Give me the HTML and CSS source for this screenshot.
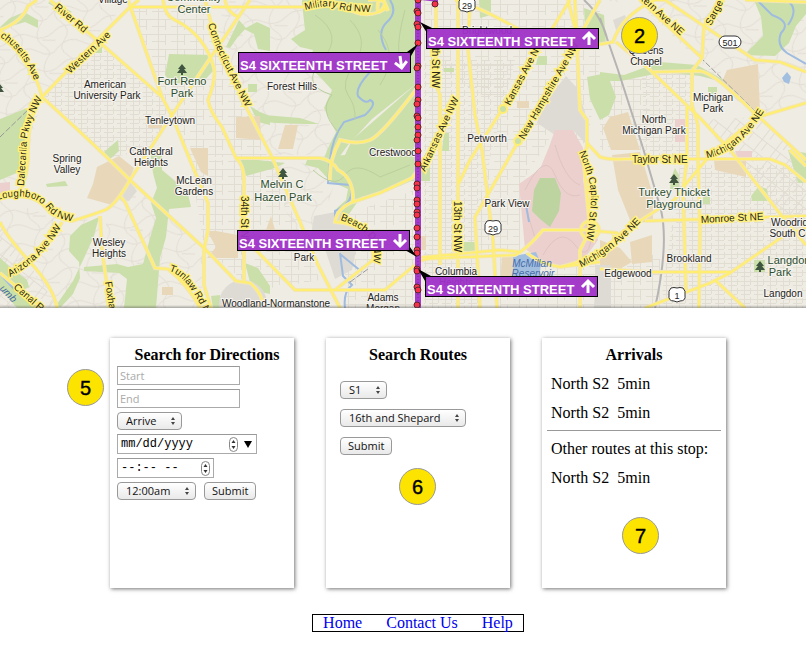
FILE: index.html
```html
<!DOCTYPE html>
<html lang="en">
<head>
<meta charset="utf-8">
<title>Bus routes and arrivals</title>
<meta name="viewport" content="width=device-width, initial-scale=1">
<link rel="stylesheet" href="styles.css">
</head>
<body>
<header class="map">
<svg class="map-art" viewBox="0 0 806 308" preserveAspectRatio="xMidYMid slice" role="img" aria-label="Route map of Washington, DC">
  <defs>
    <pattern id="grid" width="13" height="9" patternUnits="userSpaceOnUse"><path class="lane" d="M0 2.500H13M0 6.500H9M3.500 0V9M9.500 0V6"/></pattern>
    <pattern id="grid-wide" width="19" height="15" patternUnits="userSpaceOnUse"><path class="lane" d="M0 4.500H19M6.500 0V15M13.500 4V15M0 11.500H13"/></pattern>
    <pattern id="grid-tilt" width="17" height="14" patternUnits="userSpaceOnUse" patternTransform="rotate(38)"><path class="lane" d="M0 4.500H17M6.500 0V14M12.500 4V14"/></pattern>
    <pattern id="winding" width="46" height="34" patternUnits="userSpaceOnUse" patternTransform="rotate(-12)"><path class="lane" d="M0 8Q12 0 23 8T46 8M0 25Q14 14 26 24T46 25M9 0Q18 10 9 18T9 34M33 0Q24 12 33 20T33 34M33 14L46 17"/></pattern>
    <g id="tree"><path fill="#3f5540" d="M0-6L4-1H2L5 3H1V5H-1V3H-5L-2-1H-4Z"/></g>
    <g id="arrow-up"><path class="arrow" d="M0 7V-5M-6 1L0-5L6 1"/></g>
    <g id="us-shield"><path fill="#fff" stroke="#333" d="M-6-7Q-3-8 0-7Q3-8 6-7Q9-4 8 0Q9 6 3 6Q0 8-3 6Q-9 6-8 0Q-9-4-6-7Z"/></g>
    <g id="roads">
      <path d="M50 0L97 40L162 97L172 116L190 160L208 203V230L204 250V285L211 308M128 0L162 97M139 0L130 7L97 40L42 97M130 7H303Q330 0 350 10T388 7M0 30Q22 22 28 6L37 0M0 30Q33 60 42 97Q95 145 130 180L204 248L236 281L250 283Q262 292 264 308M42 97Q27 115 28 160Q25 190 15 195L0 195M205 0L213 30L245 105L272 157L300 222L318 265L340 308M163 0Q165 16 175 20Q205 35 214 68Q216 80 208 100Q210 112 222 127L236 158H320Q332 160 338 170Q354 178 353 202Q337 208 335 222Q375 225 373 260L335 290M250 0L209 60L172 115L130 180Q115 206 105 210T72 221Q54 218 40 202Q28 194 0 195M225 0Q227 12 238 17M236 158Q244 165 244 180V281M100 216L102 250L107 285L112 308M121 197L125 202L155 268L168 269Q188 285 200 308M62 222Q44 258 10 270M0 222Q6 236 30 262T57 308M0 273L42 308"/>
      <path d="M418 87Q382 135 370 140T340 140Q329 160 330 180M353 202L380 193L412 178Q435 150 455 100M244 238L295 290H385L415 265Q420 258 440 258L515 255Q526 250 543 230H585L618 233M415 258L500 250L520 252M436 0V85L440 95V265M458 0V308M470 0L468 50L475 115L482 150L493 240L497 308M570 0L503 108L470 160L458 185M600 0L560 70L518 142L475 217L480 308M575 0L580 110L587 120V145L584 165L590 230L580 250V308M568 0L580 48L613 42Q622 15 655 0M455 0Q480 7 520 30L580 50M527 253Q540 264 560 267L600 262M587 143L600 157Q610 160 625 159H770L785 165L806 182"/>
      <path d="M655 0H665L704 26L755 60L780 62L806 72M640 0L702 58M758 116L806 160M724 0L704 26L702 58L692 71V105L698 125V160L700 230L699 308M616 42L650 70L700 118L730 150L785 220L806 245M652 72L700 71Q714 72 758 117M560 267Q600 258 618 235L660 208Q675 204 685 185L712 153L758 117L806 103M687 107V160L683 190L686 290M645 221L806 216M645 308L710 283L730 273L785 235L806 228M600 269L650 272H730M715 280L745 308M745 0L806 2M790 150L806 166"/>
      <path d="M368 0Q390 -2 383 8T378 3T388 11"/>
      <circle cx="590" cy="230" r="9"/>
    </g>
  </defs>

  <rect width="806" height="308" fill="#efece4"/>

  <g class="local-streets">
    <path fill="url(#winding)" d="M0 0H128L97 40L42 97L20 185H0ZM0 200L60 218L100 220L107 308H0ZM105 210L130 180L205 250V308H112ZM230 0H305V30L290 40L335 80L325 105L337 155H268L213 30ZM250 160L340 165L320 230L300 250L268 160ZM600 0H806V102L758 117L640 5Z"/>
    <path fill="url(#grid)" d="M97 40L162 97L172 116L150 150L108 158L42 97ZM430 60H515L503 108L475 215L480 308H424V60ZM642 75L692 71L698 160H645ZM680 165H806V308H660Z"/>
    <path fill="url(#grid-wide)" d="M130 7H205L245 105L268 157H190L162 97ZM190 160H244V281L204 248ZM244 165L270 160L320 280L258 290ZM424 0H600V60L587 145L555 130L520 185V250H480L475 215L503 108L424 60ZM500 255H660V308H500ZM600 85L650 72V150H600ZM345 215L415 190V308H345Z"/>
    <path fill="url(#grid-tilt)" d="M0 220L57 306H0ZM700 120L758 117L806 160V215L785 220Z"/>
  </g>

  <g fill="#cbdfaa">
    <path d="M0 27L10 18L24 12L38 20V28L25 22L12 26L0 33ZM52 0L72 12L66 14L48 3ZM0 119L27 108L25 150L19 172L0 180Z"/>
    <path d="M169 54L213 55V71L201 84L171 83L165 75ZM95 47L102 42V53H94ZM104 152L118 140L119 151L109 160ZM226 47L239 20L246 28L237 38L230 48ZM244 29L257 22L270 28V51L258 49L254 34ZM248 84H257V92H248ZM250 106L260 112L270 116V125L258 122ZM264 115L300 118L319 124L304 124L276 123L266 122Z"/>
    <path d="M302 0H416V84L372 119L348 145L337 160L324 158L329 146L336 132L324 108L332 90L321 78L308 66L313 50L300 47L291 39L305 30L303 12Z"/>
    <path d="M308 158L345 155L352 140L416 84V179L386 192L361 197L349 214L333 218L337 208L346 200L348 189L330 181L318 168L305 165ZM237 158L258 160L285 163L275 168L246 176Z"/>
    <path d="M150 150L162 154L162 170L174 180L188 194L191 207L169 209L166 237L160 258L156 308H124L127 279L119 273L84 271V267L117 264L128 267L143 264L150 238L156 218L151 203L157 188L153 173Z"/>
    <path d="M99 217L94 236L85 256L73 281L55 307H61L73 294L80 278L79 262L69 251L70 236L81 225ZM0 258L14 270L27 280L29 287L23 290L45 308H17L0 288ZM46 184L65 181L68 186L47 187ZM211 296L220 295V308H213ZM245 263L258 268L270 286V294L252 290Z"/>
    <path d="M479 0H491V15L480 18ZM538 56L547 56V65L536 65ZM584 8L604 15L606 45L594 43L585 28ZM587 77L607 73L616 97L609 115L600 120L590 99ZM444 68H454V72H444ZM444 133H449V151H442ZM410 160H430V181H410ZM463 242H476V251H463ZM600 72L624 75L660 62L697 65L717 76L730 84L700 76L664 72L621 81L600 81Z"/>
    <path d="M754 0H806V14L796 26L789 43L775 56L744 55L763 36L761 17ZM745 77H757L759 84H746ZM708 87H717V94H708ZM671 178L675 168L679 175V190H670ZM751 196L759 186L767 189L769 201H752ZM788 150L806 153V183H798ZM754 260H765V272H754ZM611 245L618 250L616 257ZM703 197L710 194V204H703Z"/>
  </g>
  <g fill="#e8d8b9">
    <path d="M97 167L119 156L134 168L125 191L112 205L87 198L93 184ZM236 117L260 116L261 140L236 138ZM190 148H208V176L201 172ZM148 125H162V128H148ZM207 231H216L238 235V258H207L216 247ZM285 125H298L293 149H278ZM271 216L275 230H266ZM162 287H173V295H162ZM418 236H426V250H418ZM517 101H529V108H517ZM612 155L640 152L653 195V220L632 225L618 190ZM630 242L652 235V262L632 264ZM600 240L620 248L632 262L618 270L600 267ZM610 117L628 112L640 150H611L603 128ZM727 70L758 64L760 112L738 101L721 84ZM714 160H746V177L715 170ZM502 255H514V285H500Z"/>
  </g>
  <path fill="#dedbd4" d="M120 200L130 182L137 191L129 201ZM537 123L541 107L566 76L577 88L585 112V143L573 130L555 135ZM613 20L625 15L630 30H616ZM596 265H611V308H594ZM314 216L341 211L360 230L352 270L335 279L326 252L311 235Z"/>
  <circle cx="243" cy="304" r="24" fill="#dedbd4"/>
  <path fill="#ebd0ce" d="M555 130L573 130L583 148V180L592 220L598 240L580 265L558 267L542 260L525 249L519 184L540 169L549 147ZM675 119H686V142H675ZM735 151H752V158H738ZM0 183L10 182V190L0 193Z"/>
  <path fill="#bdd4a0" d="M540 178L555 178L561 193L559 211L550 227L540 219L532 211L534 190Z"/>
  <path fill="none" stroke="#dfc5c2" d="M525 190Q545 150 555 175T580 195M543 255Q560 225 575 245T592 230M555 145Q565 180 580 185M525 205L535 238"/>

  <g class="water">
    <path d="M390 0Q398 12 387 22T386 50M370 72Q355 88 358 96Q366 105 370 100Q378 103 365 115L344 122Q332 138 330 160L328 183L350 185Q356 202 335 211L335 224M340 253L343 276L352 285Q343 292 345 308M340 254L362 272M526 205L529 222M757 0L772 15Q792 22 781 33Q776 45 787 53L806 64M786 0Q800 8 788 25M0 274L14 289"/>
    <path class="lake" d="M513 256L536 252L541 264L538 287H514ZM782 78L787 72L791 77L789 84L784 82Z"/>
  </g>
  <path class="park-lane" d="M315 15Q345 35 322 60T332 95Q318 110 338 132M350 20Q370 40 355 62T348 95T355 120M378 30Q400 55 380 85M405 10Q390 65 410 70M313 170Q335 190 345 175T380 177L410 165"/>
  <path fill="none" stroke="#b5b4b2" stroke-width="2" d="M600 18L618 70L643 148L661 210Q669 245 655 308M584 0Q602 16 608 42"/>
  <path fill="none" stroke="#999" stroke-dasharray="6 2" d="M0 137L32 106M700 57L758 114M350 282L368 269"/>

  <use class="casing" href="#roads"/>
  <use class="road" href="#roads"/>
  <circle class="junction" cx="503" cy="109" r="4"/><circle class="junction" cx="518" cy="141" r="4"/>

  <defs>
    <path id="p-river" d="M54 8L92 40"/>
    <path id="p-mass" d="M0 37Q25 52 37 88"/>
    <path id="p-western" d="M70 74L118 29"/>
    <path id="p-dale" d="M24 186L27 140Q29 120 46 92"/>
    <path id="p-conn" d="M208 24Q216 50 226 68L254 124"/>
    <path id="p-lough" d="M-3 200Q32 190 47 209Q56 221 82 222"/>
    <path id="p-ariz" d="M10 277Q42 261 64 222"/>
    <path id="p-canal" d="M13 288L50 320"/>
    <path id="p-tunlaw" d="M169 271Q190 276 212 330"/>
    <path id="p-military" d="M305 10Q328 4 336 8T376 12"/>
    <path id="p-beach" d="M340 220Q364 228 371 240T369 280"/>
    <path id="p-kansas" d="M510 106L550 30"/>
    <path id="p-hamp" d="M524 140L584 36"/>
    <path id="p-ark" d="M425 172L464 88"/>
    <path id="p-capitol" d="M579 152Q592 183 591 200T584 256"/>
    <path id="p-mich-low" d="M581 267Q612 254 646 216"/>
    <path id="p-mich-high" d="M707 158Q742 152 768 104"/>
    <path id="p-eastern" d="M637 -3L694 48"/>
    <path id="p-sarge" d="M711 26L731 -12"/>
  </defs>
  <g class="road-name">
    <text><textPath href="#p-river">River Rd</textPath></text>
    <text><textPath href="#p-mass">chusetts Ave</textPath></text>
    <text><textPath href="#p-western">Western Ave</textPath></text>
    <text><textPath href="#p-dale">Dalecarlia Pkwy NW</textPath></text>
    <text><textPath href="#p-conn">Connecticut Ave NW</textPath></text>
    <text><textPath href="#p-lough">Loughboro Rd NW</textPath></text>
    <text><textPath href="#p-ariz">Arizona Ave NW</textPath></text>
    <text><textPath href="#p-canal">Canal R</textPath></text>
    <text><textPath href="#p-tunlaw">Tunlaw Rd N</textPath></text>
    <text><textPath href="#p-military">Military Rd NW</textPath></text>
    <text><textPath href="#p-beach">Beach Dr NW</textPath></text>
    <text><textPath href="#p-kansas">Kansas Ave NW</textPath></text>
    <text><textPath href="#p-hamp">New Hampshire Ave NW</textPath></text>
    <text><textPath href="#p-ark">Arkansas Ave NW</textPath></text>
    <text><textPath href="#p-capitol">North Capitol St NW</textPath></text>
    <text><textPath href="#p-mich-low">Michigan Ave NE</textPath></text>
    <text><textPath href="#p-mich-high">Michigan Ave NE</textPath></text>
    <text><textPath href="#p-eastern">stern Ave NE</textPath></text>
    <text><textPath href="#p-sarge">Sarge</textPath></text>
    <text transform="translate(105 282) rotate(81)">Foxha</text>
    <text transform="translate(241 196) rotate(90)">34th St NW</text>
    <text transform="translate(432 48) rotate(90)">th St NW</text>
    <text transform="translate(454 201) rotate(90)">13th St NW</text>
    <text x="632" y="163">Taylor St NE</text>
    <text transform="translate(701 223) rotate(-3)">Monroe St NE</text>
  </g>
  <g class="place-name">
    <text x="113" y="3">Village</text>
    <text x="105" y="88">American</text><text x="107" y="99">University Park</text>
    <text x="170" y="124">Tenleytown</text>
    <text x="151" y="155">Cathedral</text><text x="151" y="166">Heights</text>
    <text x="67" y="162">Spring</text><text x="67" y="173">Valley</text>
    <text x="109" y="246">Wesley</text><text x="109" y="257">Heights</text>
    <text x="194" y="184">McLean</text><text x="194" y="195">Gardens</text>
    <text x="292" y="90">Forest Hills</text><text x="393" y="156">Crestwood</text>
    <text x="304" y="261">Park</text><text x="276" y="307">Woodland-Normanstone</text>
    <text x="383" y="301">Adams</text><text x="383" y="312">Morgan</text>
    <text x="487" y="34">Brightwood</text><text x="487" y="142">Petworth</text>
    <text x="507" y="207">Park View</text><text x="456" y="275">Columbia</text><text x="456" y="286">Heights</text>
    <text x="628" y="277">Edgewood</text><text x="689" y="262">Brookland</text>
    <text x="654" y="123">North</text><text x="654" y="134">Michigan Park</text>
    <text x="713" y="101">Michigan</text><text x="713" y="112">Park</text>
    <text x="646" y="54">Queens</text><text x="646" y="65">Chapel</text>
    <text x="795" y="226">Woodridge</text><text x="800" y="237">South Central</text><text x="783" y="297">Langdon</text>
  </g>
  <g class="park-name">
    <text x="194" y="1">Community</text><text x="194" y="13">Center</text>
    <text x="182" y="85">Fort Reno</text><text x="182" y="97">Park</text>
    <text x="282" y="188">Melvin C</text><text x="283" y="201">Hazen Park</text>
    <text x="674" y="196">Turkey Thicket</text><text x="674" y="208">Playground</text>
    <text x="789" y="264">Langdon</text><text x="780" y="276">Park</text>
  </g>
  <g class="water-name"><text x="532" y="267">McMillan</text><text x="533" y="277">Reservoir</text><text transform="translate(6 296) rotate(46)">umb</text></g>
  <use href="#tree" x="182" y="70"/><use href="#tree" x="283" y="174"/><use href="#tree" x="674" y="180"/><use href="#tree" x="760" y="267"/><use href="#tree" x="-1" y="89"/>
  <use href="#us-shield" x="467" y="5"/><use href="#us-shield" x="493" y="228"/><use href="#us-shield" x="677" y="295"/>
  <rect x="719" y="36" width="22" height="12" rx="6" fill="#fff" stroke="#333"/>
  <g class="shield-number"><text x="467" y="9">29</text><text x="493" y="232">29</text><text x="677" y="299">1</text><text x="730" y="46">501</text></g>

  <path fill="#a23bc9" d="M415 0H421V308H415ZM421 0H438V2L421 0Z"/>
  <path fill="none" stroke="#7f27a4" stroke-dasharray="1 2" d="M418 0V308"/>
  <g class="stops">
    <circle cx="418" cy="0" r="3"/><circle cx="417" cy="11" r="3"/><circle cx="418" cy="13" r="3"/><circle cx="417" cy="24" r="3"/><circle cx="418" cy="27" r="3"/><circle cx="418" cy="43" r="3"/><circle cx="418" cy="66" r="3"/><circle cx="417" cy="68" r="3"/><circle cx="418" cy="87" r="3"/><circle cx="418" cy="100" r="3"/><circle cx="417" cy="104" r="3"/><circle cx="417" cy="116" r="3"/><circle cx="418" cy="118" r="3"/><circle cx="418" cy="127" r="3"/><circle cx="418" cy="135" r="3"/><circle cx="417" cy="140" r="3"/><circle cx="418" cy="151" r="3"/><circle cx="418" cy="164" r="3"/><circle cx="417" cy="184" r="3"/><circle cx="417" cy="188" r="3"/><circle cx="417" cy="200" r="3"/><circle cx="417" cy="204" r="3"/><circle cx="417" cy="212" r="3"/><circle cx="417" cy="215" r="3"/><circle cx="417" cy="228" r="3"/><circle cx="417" cy="237" r="3"/><circle cx="417" cy="250" r="3"/><circle cx="417" cy="253" r="3"/><circle cx="417" cy="269" r="3"/><circle cx="417" cy="271" r="3"/><circle cx="417" cy="287" r="3"/><circle cx="418" cy="290" r="3"/><circle cx="417" cy="305" r="3"/><circle cx="435" cy="4" r="3"/>
  </g>
  <g class="route-flags">
    <path d="M418 44L407 52L411 56ZM420 22L427 33L432 28ZM417 257L405 250L410 247ZM418 269L425 281L431 276Z"/>
    <rect x="238.500" y="52.500" width="172" height="20"/><rect x="426.500" y="28.500" width="172" height="20"/>
    <rect x="237.500" y="230.500" width="172" height="20"/><rect x="425.500" y="276.500" width="172" height="20"/>
    <text x="240" y="70">S4 SIXTEENTH STREET</text><text x="428" y="46">S4 SIXTEENTH STREET</text>
    <text x="239" y="248">S4 SIXTEENTH STREET</text><text x="427" y="294">S4 SIXTEENTH STREET</text>
  </g>
  <use href="#arrow-up" transform="translate(401 63) rotate(172)"/><use href="#arrow-up" x="589" y="38"/>
  <use href="#arrow-up" transform="translate(400 241) rotate(180)"/><use href="#arrow-up" x="588" y="286"/>
</svg>
<span class="badge badge-map">2</span>
</header>

<main class="panels">
  <form class="panel directions">
    <h2>Search for Directions</h2>
    <span class="badge badge-directions">5</span>
    <input class="place" type="text" placeholder="Start" aria-label="Start">
    <input class="place" type="text" placeholder="End" aria-label="End">
    <span class="picker"><select aria-label="Arrive or depart"><option>Arrive</option></select><svg class="carets" viewBox="0 0 6 8"><path d="M3 0L5 3H1ZM3 8L5 5H1Z"/></svg></span>
    <span class="stamp date"><input type="text" placeholder="mm/dd/yyyy" aria-label="Date"><svg class="stepper" viewBox="0 0 9 15"><rect x=".5" y=".5" width="8" height="14" rx="4"/><path d="M4.500 3L6.500 6H2.500ZM4.500 12L6.500 9H2.500Z"/></svg><svg class="drop" viewBox="0 0 8 7"><path d="M0 0H8L4 7Z"/></svg></span>
    <span class="stamp time"><input type="text" placeholder="--:-- --" aria-label="Time"><svg class="stepper" viewBox="0 0 9 15"><rect x=".5" y=".5" width="8" height="14" rx="4"/><path d="M4.500 3L6.500 6H2.500ZM4.500 12L6.500 9H2.500Z"/></svg></span>
    <div class="send">
      <span class="picker"><select aria-label="Hour"><option>12:00am</option></select><svg class="carets" viewBox="0 0 6 8"><path d="M3 0L5 3H1ZM3 8L5 5H1Z"/></svg></span>
      <button type="button">Submit</button>
    </div>
  </form>

  <form class="panel routes">
    <h2>Search Routes</h2>
    <span class="picker"><select aria-label="Route"><option>S1</option></select><svg class="carets" viewBox="0 0 6 8"><path d="M3 0L5 3H1ZM3 8L5 5H1Z"/></svg></span>
    <span class="picker"><select aria-label="Stop"><option>16th and Shepard</option></select><svg class="carets" viewBox="0 0 6 8"><path d="M3 0L5 3H1ZM3 8L5 5H1Z"/></svg></span>
    <button type="button">Submit</button>
    <span class="badge badge-routes">6</span>
  </form>

  <section class="panel arrivals">
    <h2>Arrivals</h2>
    <p><span>North S2</span><span>5min</span></p>
    <p><span>North S2</span><span>5min</span></p>
    <hr>
    <p>Other routes at this stop:</p>
    <p><span>North S2</span><span>5min</span></p>
    <span class="badge badge-arrivals">7</span>
  </section>
</main>

<footer class="footer">
  <nav><a href="#home">Home</a><a href="#contact">Contact Us</a><a href="#help">Help</a></nav>
</footer>
</body>
</html>
```
FILE: styles.css
```css
* { box-sizing: border-box; }

body {
  margin: 0;
  background: #fff;
  color: #000;
  font: 16px/18px "Liberation Serif", "Times New Roman", serif;
}

/* Map */
.map { position: relative; height: 308px; overflow: hidden; }
.map::after {
  content: "";
  position: absolute;
  inset: auto 0 0;
  height: 3px;
  background: linear-gradient(rgba(80, 80, 80, 0), rgba(80, 80, 80, .45));
}
.map-art { display: block; width: 100%; height: 100%; font-family: "Liberation Sans", Arial, sans-serif; }
.lane { fill: none; stroke: #e2ddd3; stroke-width: 1; }
.park-lane { fill: none; stroke: #bbd09e; }
.water path { fill: none; stroke: #9fbbdf; stroke-width: 2; }
.water .lake { fill: #a3bfe0; stroke: none; }
.casing { fill: none; stroke: #f3e6b4; stroke-width: 4; }
.road { fill: none; stroke: #ffee70; stroke-width: 2; stroke-linejoin: round; }
.junction { fill: #cbdfaa; stroke: #ffee70; stroke-width: 2; }
.road-name text { font-size: 10px; fill: #29261a; stroke: #fff07c; stroke-width: 3px; paint-order: stroke; }
.place-name text,
.park-name text { text-anchor: middle; stroke: #f7f5ef; stroke-width: 2px; paint-order: stroke; }
.place-name text { font-size: 10px; fill: #222; }
.park-name text { font-size: 11px; fill: #2c4d30; }
.water-name text { font-size: 10px; font-style: italic; fill: #466ba7; text-anchor: middle; }
.shield-number text { font-size: 9px; fill: #222; text-anchor: middle; }
.stops circle { fill: #fb3149; stroke: #562530; stroke-width: 1; }
.route-flags rect { fill: #9f32c9; fill-opacity: .95; stroke: #000; }
.route-flags text { font-size: 13px; font-weight: 700; fill: #fff; }
.arrow { fill: none; stroke: #fff; stroke-width: 3; }

/* Numbered markers */
.badge {
  position: absolute;
  z-index: 1;
  display: grid;
  place-items: center;
  width: 37px;
  height: 37px;
  border: 1px solid #999;
  border-radius: 50%;
  background: #fce300;
  font: 20px/20px "Liberation Sans", Arial, sans-serif;
  -webkit-text-stroke: .4px #000;
}
.badge-map { top: 17px; left: calc(50% + 218px); }
.badge-directions { top: 31px; left: -43px; }
.badge-routes { top: 130px; left: 73px; }
.badge-arrivals { top: 179px; left: 80px; }

/* Panels */
.panels {
  display: grid;
  grid-template-columns: repeat(3, minmax(0, 184px));
  justify-content: center;
  gap: 32px;
  padding: 30px 0 0 30px;
}
.panel {
  position: relative;
  display: flex;
  flex-direction: column;
  align-items: flex-start;
  min-height: 250px;
  padding: 8px 7px;
  background: #fff;
  box-shadow: 1px 1px 4px rgba(0, 0, 0, .55);
}
h2 { align-self: stretch; margin: 0; font-size: 16px; line-height: 18px; text-align: center; }

.directions { gap: 4px; }
.directions h2 { padding-left: 10px; margin-bottom: -2px; }
.routes { gap: 10px; padding-left: 14px; padding-right: 14px; }
.routes h2 { margin-bottom: 7px; }

input, select, button { margin: 0; color: #111; font: 11px/14px "Open Sans", "Noto Sans", sans-serif; }
input { border: 1px solid #aaa; border-top-color: #999; background: #fff; }
.place { width: 123px; height: 19px; padding: 0 2px; }
.place::placeholder { color: #aaa; opacity: 1; }

select, button {
  appearance: none;
  height: 18px;
  border: 1px solid #999;
  border-radius: 4px;
  background: linear-gradient(#fff, #f4f4f4 50%, #e9e9e9);
}
select { display: block; padding: 0 24px 0 8px; }
button { padding: 0 7px; }
.picker { position: relative; }
.carets { position: absolute; top: 5px; right: 6px; width: 6px; height: 8px; fill: #444; }

.stamp { position: relative; }
.stamp input { display: block; width: 100%; height: 20px; padding: 0 3px; font: 12px/16px "Liberation Mono", "Courier New", monospace; }
.stamp input::placeholder { color: #000; opacity: 1; }
.date { width: 140px; }
.time { width: 97px; }
.stepper { position: absolute; top: 3px; right: 4px; width: 9px; height: 15px; }
.stepper rect { fill: #fff; stroke: #888; }
.stepper path { fill: #333; }
.date .stepper { right: 19px; }
.drop { position: absolute; top: 7px; right: 5px; width: 8px; height: 7px; }
.send { display: flex; gap: 8px; }

.arrivals { padding: 8px 5px; }
.arrivals h2 { margin-bottom: 11px; }
.arrivals p { display: flex; gap: 8px; margin: 0 4px 11px; white-space: nowrap; }
.arrivals hr { align-self: stretch; margin: -3px 0 9px; border: 0; border-top: 1px solid #999; }

/* Footer */
.footer { display: flex; justify-content: center; padding: 26px 0 20px 30px; }
.footer nav { display: flex; gap: 24px; padding: 0 10px; border: 1px solid #000; line-height: 16px; }
.footer a { color: #00e; text-decoration: none; }
```
